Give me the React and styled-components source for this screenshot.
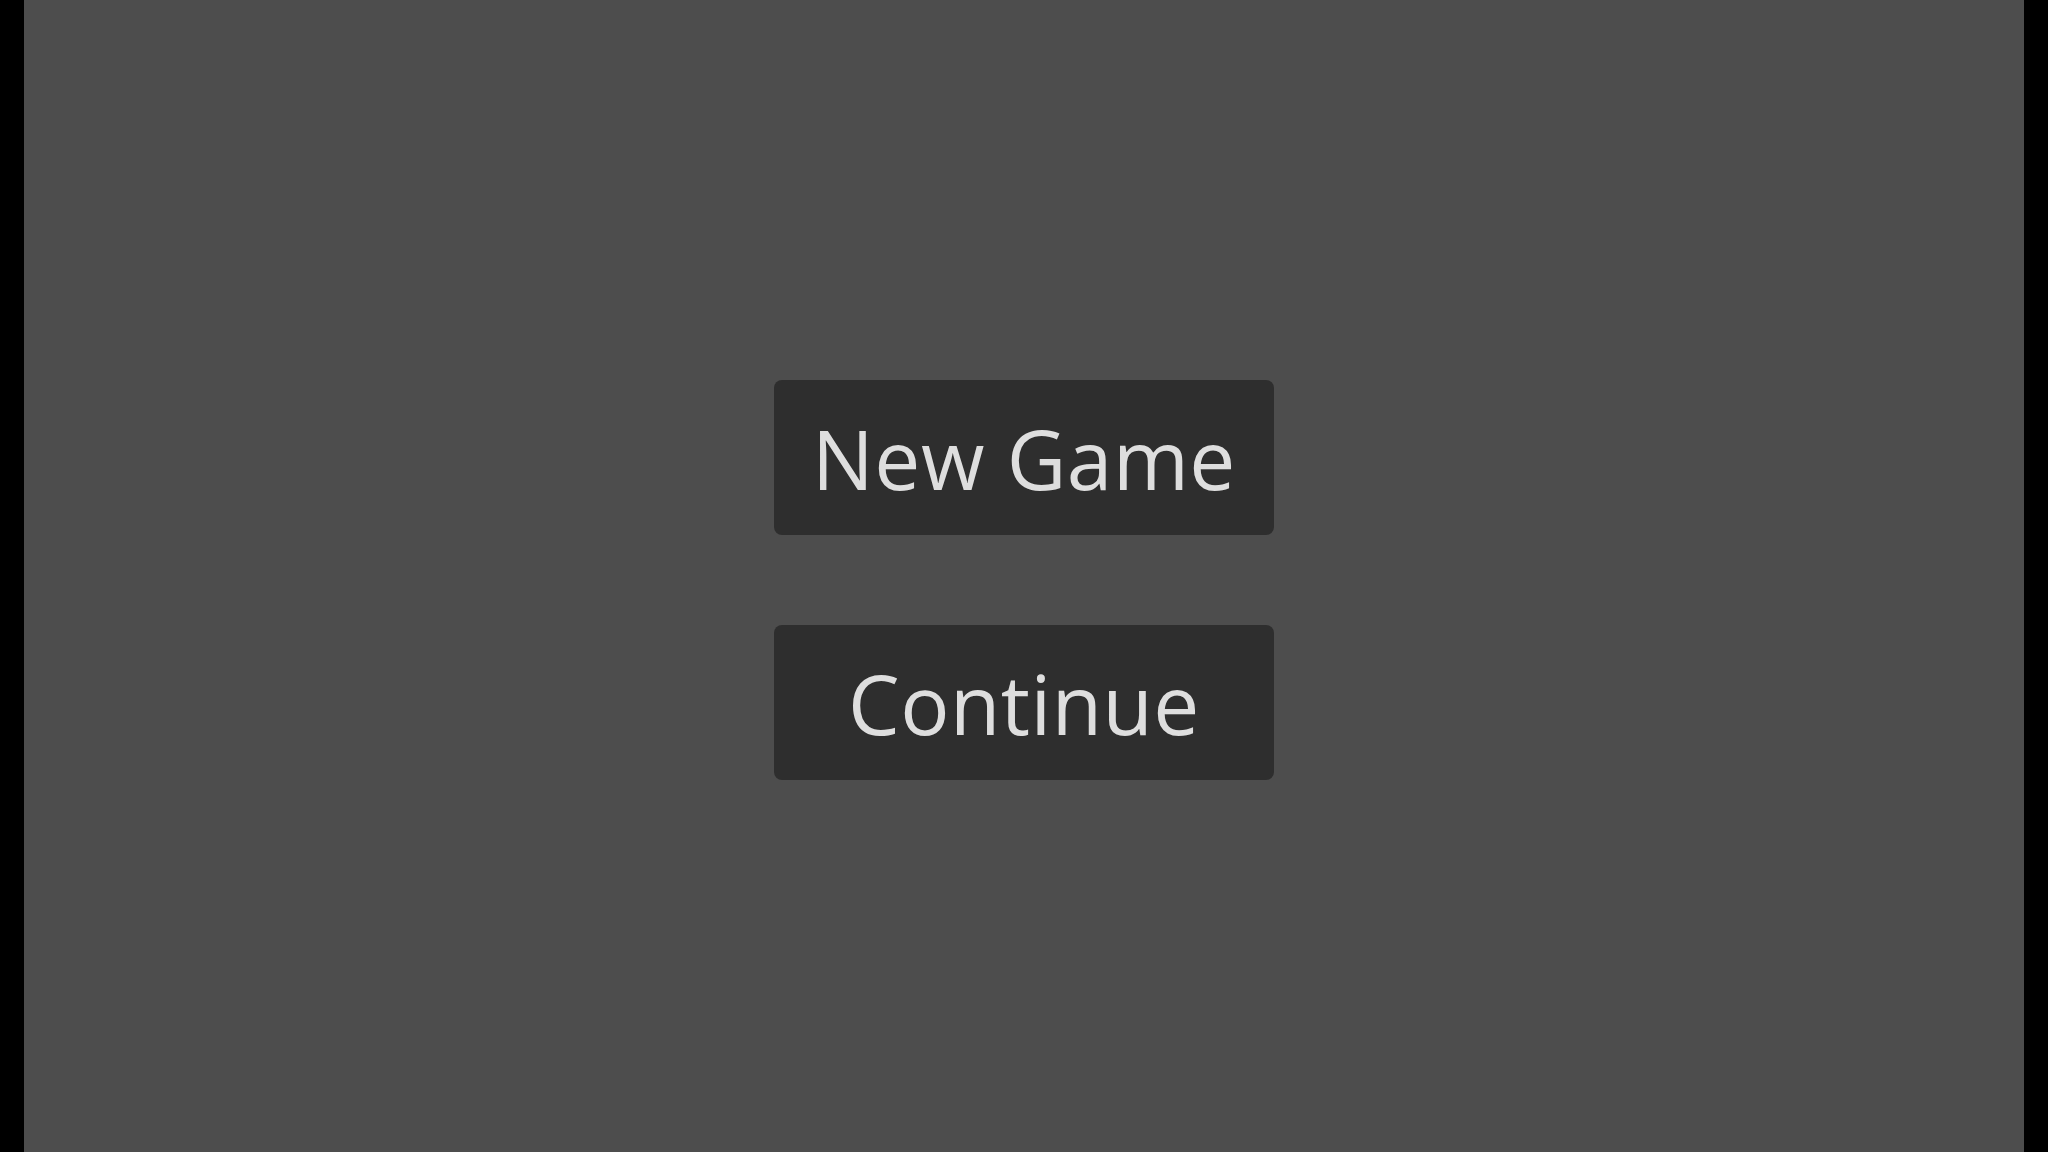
import styled, { createGlobalStyle } from "styled-components";

const GlobalStyle = createGlobalStyle`
  html, body {
    margin: 0;
    padding: 0;
    background: #000;
    height: 100%;
  }
  #root {
    height: 100%;
  }
`;

const Screen = styled.div`
  display: flex;
  justify-content: center;
  height: 100vh;
  background: #000;
`;

const Stage = styled.div`
  width: 2000px;
  height: 100%;
  background: #4d4d4d;
  display: flex;
  flex-direction: column;
  align-items: center;
  justify-content: center;
  gap: 90px;
  padding-top: 8px;
  box-sizing: border-box;
`;

const MenuButton = styled.button`
  width: 500px;
  height: 155px;
  border: none;
  border-radius: 8px;
  background: #2e2e2e;
  color: #dedede;
  font-family: "Open Sans", "Noto Sans", sans-serif;
  font-size: 82px;
  font-weight: 400;
  letter-spacing: 0.5px;
  line-height: 1;
  padding: 0;
  cursor: pointer;
`;

export default function App() {
  return (
    <Screen>
      <GlobalStyle />
      <Stage>
        <MenuButton>New Game</MenuButton>
        <MenuButton>Continue</MenuButton>
      </Stage>
    </Screen>
  );
}
